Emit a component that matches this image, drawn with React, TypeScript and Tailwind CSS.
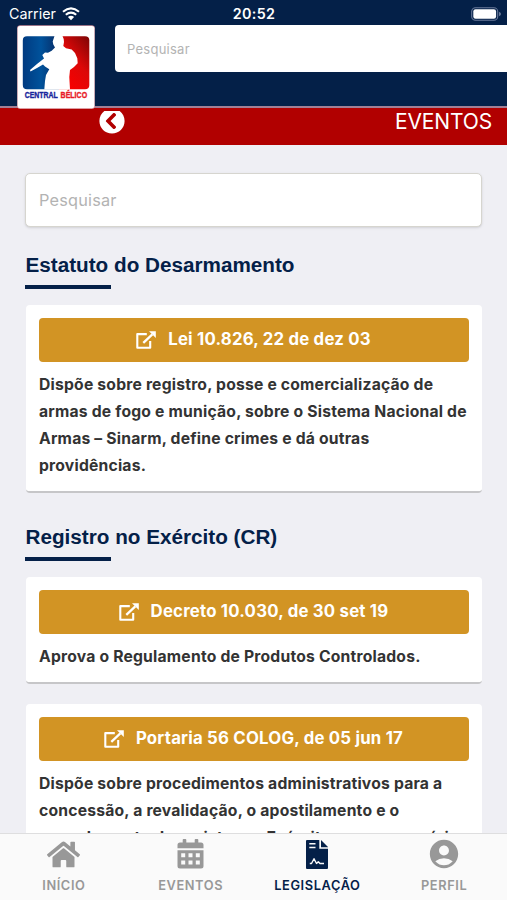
import React from 'react';
import { FaHome, FaChevronCircleLeft } from 'react-icons/fa';
import { MdAccountCircle } from 'react-icons/md';

const sections = [
  {
    title: 'Estatuto do Desarmamento',
    laws: [
      {
        name: 'Lei 10.826, 22 de dez 03',
        lines: [
          'Dispõe sobre registro, posse e comercialização de',
          'armas de fogo e munição, sobre o Sistema Nacional de',
          'Armas – Sinarm, define crimes e dá outras',
          'providências.',
        ],
      },
    ],
  },
  {
    title: 'Registro no Exército (CR)',
    laws: [
      {
        name: 'Decreto 10.030, de 30 set 19',
        lines: ['Aprova o Regulamento de Produtos Controlados.'],
      },
      {
        name: 'Portaria 56 COLOG, de 05 jun 17',
        lines: [
          'Dispõe sobre procedimentos administrativos para a',
          'concessão, a revalidação, o apostilamento e o',
          'cancelamento de registro no Exército para o exercício',
        ],
      },
    ],
  },
];

type IconProps = { className?: string };

const CalendarIcon = ({ className }: IconProps) => (
  <svg viewBox="0 0 27 30" className={className} fill="currentColor">
    <path d="M6.500 0H8.500Q9.300 0 9.300 1V3.500H17.700V1Q17.700 0 18.500 0H20.500Q21.300 0 21.300 1V3.500H24Q26.500 3.500 26.500 6V9.300H0.500V6Q0.500 3.500 3 3.500H5.700V1Q5.700 0 6.500 0Z" />
    <path
      fillRule="evenodd"
      d="M0.500 11.300H26.500V27Q26.500 29.500 24 29.500H3Q0.500 29.500 0.500 27ZM4.200 14.200V18.200H8.200V14.200ZM11.500 14.200V18.200H15.500V14.200ZM18.800 14.200V18.200H22.800V14.200ZM4.200 21.500V25.500H8.200V21.500ZM11.500 21.500V25.500H15.500V21.500ZM18.800 21.500V25.500H22.800V21.500Z"
    />
  </svg>
);

const ContractIcon = ({ className }: IconProps) => (
  <svg viewBox="0 0 22 29" className={className}>
    <path d="M1 0H13.300V8.700H22V28Q22 29 21 29H1Q0 29 0 28V1Q0 0 1 0Z" fill="currentColor" />
    <path d="M15 0L22 7V7.200H15Z" fill="currentColor" />
    <path d="M3.300 3.700H9.500M3.300 7.500H9.500" stroke="#fafafa" strokeWidth="1.400" />
    <path d="M3.800 23.500H5.500L8 18.700L10.500 23.500L12.300 21.700L14 23.500H18" fill="none" stroke="#fafafa" strokeWidth="1.400" strokeLinejoin="round" />
  </svg>
);

const ExternalIcon = ({ className }: IconProps) => (
  <svg viewBox="0 0 20 18" className={className}>
    <path d="M10.800 3.100H1.300V16.700H14.200V10" fill="none" stroke="currentColor" strokeWidth="2.100" strokeLinejoin="round" />
    <path d="M7.300 11.800L16.300 3.400" stroke="currentColor" strokeWidth="2.300" />
    <path d="M13 0.200H19.800V7Z" fill="currentColor" />
  </svg>
);

const tabs = [
  { label: 'INÍCIO', Icon: FaHome, size: 'h-[33px] w-[33px]' },
  { label: 'EVENTOS', Icon: CalendarIcon, size: 'h-[30px] w-[27px]' },
  { label: 'LEGISLAÇÃO', Icon: ContractIcon, size: 'h-[29px] w-[22px]', active: true },
  { label: 'PERFIL', Icon: MdAccountCircle, size: 'h-[34px] w-[34px]' },
];

const Logo = () => (
  <svg viewBox="0 0 78 84" className="block h-[84px] w-[78px]">
    <defs>
      <linearGradient id="blue" x1="0" x2="1">
        <stop offset="0" stopColor="#003a80" />
        <stop offset="0.5" stopColor="#00529b" />
        <stop offset="1" stopColor="#082a63" />
      </linearGradient>
      <linearGradient id="red" x1="1" x2="0.3" y1="0" y2="1">
        <stop offset="0" stopColor="#7c0505" />
        <stop offset="0.5" stopColor="#dc0808" />
        <stop offset="1" stopColor="#fb0000" />
      </linearGradient>
    </defs>
    <rect x="0.200" y="0.500" width="77.600" height="83.300" rx="3" fill="#fff" stroke="#c0475a" strokeWidth="0.400" />
    <path d="M10 11.300H42V64.300H10Q5.800 64.300 5.800 60V15.500Q5.800 11.300 10 11.300Z" fill="url(#blue)" />
    <path d="M42 11.300H68Q72.300 11.300 72.300 15.500V60Q72.300 64.300 68 64.300H42Z" fill="url(#red)" />
    <path
      d="M37.500 11H45.500L46.700 14L47 17L46.300 21L49 23.300L54.700 24.500L58 28L60.300 33.300L60.700 38.300L57 42L53 45L52.300 52L53 64.500H27.300L28 56L29 50L32.300 44.300L28 41.500L26 39.500L20 43L13.500 46.500L13 45L20 39L27 33.500L25.300 30L28 27.500L31 27.800L34.700 25.700L38 22.500L36.300 19.500L35.700 16.500Z"
      fill="#fff"
    />
    <g fontSize="8.200" fontWeight="700" fontFamily="Liberation Sans, sans-serif" strokeWidth="0.350">
      <text x="7.700" y="73" fill="#17249b" stroke="#17249b" textLength="33" lengthAdjust="spacingAndGlyphs">CENTRAL</text>
      <text x="43.600" y="73" fill="#e81c28" stroke="#e81c28" textLength="26.500" lengthAdjust="spacingAndGlyphs">BÉLICO</text>
    </g>
  </svg>
);

const Wifi = () => (
  <svg viewBox="0 0 18 14" className="ml-[6px] h-[14px] w-[18px]">
    <path d="M1 4.700Q9 -2.100 17 4.700M3.800 7.800Q9 3.400 14.200 7.800" fill="none" stroke="#fff" strokeWidth="2.100" />
    <path d="M5.900 10Q9 7.400 12.100 10L9 13.200Z" fill="#fff" />
  </svg>
);

const Battery = () => (
  <svg viewBox="0 0 30 14" className="h-[14px] w-[30px]">
    <rect x="0.700" y="0.700" width="26" height="12.600" rx="3.800" fill="none" stroke="#69799a" strokeWidth="1.100" />
    <rect x="2.300" y="2.200" width="22.800" height="9.600" rx="2.200" fill="#fff" />
    <path d="M28 4.700Q30 5.500 30 7T28 9.300Z" fill="#69799a" />
  </svg>
);

const App = () => {
  return (
    <div className="flex h-[900px] w-[507px] flex-col overflow-hidden bg-[#efeff4] font-['Inter',sans-serif]">
      <header className="flex h-[108px] shrink-0 flex-col border-b-2 border-[#a17f95] bg-[#042048]">
        <div className="grid h-[25px] shrink-0 grid-cols-3 items-center pt-[2px] text-white">
          <div className="flex items-center pl-[9px] text-[14.3px]">
            Carrier
            <Wifi />
          </div>
          <div className="pl-px text-center text-[14.3px] font-semibold tracking-[0.35px]">20:52</div>
          <div className="flex justify-end pr-[6px]">
            <Battery />
          </div>
        </div>
        <div className="flex items-start">
          <div className="relative z-10 ml-[17px] shrink-0">
            <Logo />
          </div>
          <div className="ml-[20px] flex h-[47px] flex-1 items-center rounded-l-[4px] bg-white pt-[2px] pl-[12px] text-[13px] tracking-[0.25px] text-[#b3b3b3]">
            Pesquisar
          </div>
        </div>
      </header>

      <div className="flex h-[37px] shrink-0 items-start justify-between overflow-hidden bg-[#b10000] pr-[15px] pl-[99px] text-white">
        <div className="mt-[3px] flex h-[23px] items-end overflow-hidden">
          <FaChevronCircleLeft className="h-[26px] w-[26px] shrink-0" />
        </div>
        <span className="text-[21px] leading-[27px] font-normal tracking-[-0.15px]">EVENTOS</span>
      </div>

      <main className="flex min-h-0 flex-1 flex-col overflow-hidden px-[25px] pt-[28px]">
        <div className="flex h-[54px] shrink-0 items-center rounded-[5px] border border-[#d6d5cf] bg-white pl-[13px] text-[16.3px] tracking-[0.2px] text-[#b3b3b3] shadow-sm">
          Pesquisar
        </div>
        {sections.map((section) => (
          <section key={section.title} className="shrink-0 pt-[24px]">
            <h2 className="h-[34px] pl-[0.5px] font-['Liberation_Sans',sans-serif] text-[20.7px] leading-[28px] font-bold text-[#042048]">
              {section.title}
            </h2>
            <div className="h-[4px] w-[86px] bg-[#042048]" />
            <div className="flex flex-col gap-[20px] pt-[16px] pb-[6px]">
              {section.laws.map((law) => (
                <article key={law.name} className="ml-px rounded-[4px] border-b-2 border-[#c6c6c8] bg-white px-[13px] pt-[12.5px] pb-[12.5px]">
                  <button className="flex h-[44px] w-full items-center justify-center rounded-[4px] bg-[#d29424] pr-px text-[16.8px] font-[650] tracking-[0.2px] text-white">
                    <ExternalIcon className="mr-[12px] h-[18px] w-[20px]" />
                    {law.name}
                  </button>
                  <p className="pt-[9px] text-[15.7px] leading-[27px] font-[650] tracking-[0.2px] whitespace-nowrap text-[#333]">
                    {law.lines.map((line) => (
                      <span key={line} className="block">{line}</span>
                    ))}
                  </p>
                </article>
              ))}
            </div>
          </section>
        ))}
      </main>

      <nav className="grid h-[67px] shrink-0 grid-cols-4 border-t border-[#dededf] bg-[#fafafa]">
        {tabs.map(({ label, Icon, size, active }) => (
          <div key={label} className={`flex flex-col items-center pl-px ${active ? 'text-[#042048]' : 'text-[#989898]'}`}>
            <div className="mt-[3px] flex h-[34px] items-center justify-center">
              <Icon className={size} />
            </div>
            <span className="mt-[6px] text-[12.8px] leading-[17px] font-semibold tracking-[0.6px]">{label}</span>
          </div>
        ))}
      </nav>
    </div>
  );
};

export default App;
